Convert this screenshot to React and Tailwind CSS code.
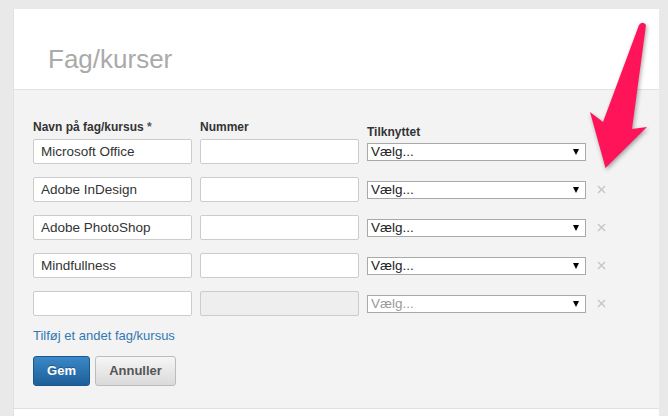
import React from "react";

const rows = [
  { name: "Microsoft Office", removable: false },
  { name: "Adobe InDesign", removable: true },
  { name: "Adobe PhotoShop", removable: true },
  { name: "Mindfullness", removable: true },
  { name: "", removable: true, empty: true },
];

function RemoveIcon() {
  return (
    <svg width="9" height="9" viewBox="0 0 9 9" className="block">
      <path d="M1 1 L8 8 M8 1 L1 8" stroke="#c5c5c5" strokeWidth="1.4" />
    </svg>
  );
}

function Select({ muted }) {
  return (
    <div className="relative w-[219px] h-[18px] bg-white border border-[#a9a9a9] flex items-center pl-[3px]">
      <span className={`text-[13.5px] leading-[16px] ${muted ? "text-[#9a9a9a]" : "text-[#222]"}`}>Vælg...</span>
      <span className="absolute right-[6px] top-[5px] w-0 h-0 border-l-[3.5px] border-r-[3.5px] border-t-[6px] border-l-transparent border-r-transparent border-t-black"></span>
    </div>
  );
}

export default function App() {
  return (
    <div className="relative w-full h-[416px] overflow-hidden bg-[#e9e9e9] pt-[9px] pl-[13px] font-['Liberation_Sans',Arial,sans-serif]">
      <div className="w-[646px] h-[407px] bg-white border-l border-[#e2e2e2]">
        {/* header */}
        <div className="h-[81px] border-b border-[#e2e2e2] pt-[35px] pl-[34px]">
          <h1 className="text-[26px] leading-[30px] text-[#aaaaaa]">Fag/kurser</h1>
        </div>

        {/* form body */}
        <div className="h-[318px] bg-[#f3f3f3] pt-[30px] pl-[19px]">
          <div className="flex gap-[8px] h-[19px] text-[12px] leading-[14px] font-bold text-[#333]">
            <div className="w-[159px]">
              Navn på fag/kursus <span className="text-[#555]">*</span>
            </div>
            <div className="w-[159px]">Nummer</div>
            <div className="w-[219px] pt-[5px]">Tilknyttet</div>
          </div>

          <div className="flex flex-col gap-[13px]">
            {rows.map((row, i) => (
              <div key={i} className="flex items-center gap-[8px] h-[25px]">
                <input
                  readOnly
                  value={row.name}
                  className="w-[159px] h-[25px] bg-white border border-[#cccccc] rounded-[2px] px-[7px] text-[13.5px] text-[#333] outline-none"
                />
                <input
                  readOnly
                  value=""
                  className={`w-[159px] h-[25px] border border-[#cccccc] rounded-[2px] px-[7px] text-[13px] outline-none ${row.empty ? "bg-[#eeeeee]" : "bg-white"}`}
                />
                <Select muted={row.empty} />
                {row.removable && (
                  <div className="ml-[3px]">
                    <RemoveIcon />
                  </div>
                )}
              </div>
            ))}
          </div>

          <a className="block mt-[12px] text-[13px] leading-[16px] text-[#3278b3] cursor-pointer">
            Tilføj et andet fag/kursus
          </a>

          <div className="flex gap-[5px] mt-[12px]">
            <button className="h-[30px] w-[57px] rounded-[3px] border border-[#1b578a] bg-gradient-to-b from-[#3a88c8] to-[#1d5f99] text-white text-[13px] font-bold [text-shadow:0_-1px_0_rgba(0,0,0,0.3)]">
              Gem
            </button>
            <button className="h-[30px] w-[81px] rounded-[3px] border border-[#bcbcbc] bg-gradient-to-b from-[#f6f6f6] to-[#dadada] text-[#555] text-[13px] font-bold">
              Annuller
            </button>
          </div>
        </div>
        <div className="border-t border-[#e0e0e0]"></div>
      </div>

      {/* annotation arrow */}
      <svg
        className="absolute left-0 top-0 pointer-events-none drop-shadow-[1px_2px_2px_rgba(0,0,0,0.35)]"
        width="668"
        height="416"
        viewBox="0 0 668 416"
      >
        <path
          d="M639 25 Q642.5 20.5 646 25 L632 129 L647 127 L605.5 168 L590 112 L603 122 Z"
          fill="#ff1459"
        />
      </svg>
    </div>
  );
}
